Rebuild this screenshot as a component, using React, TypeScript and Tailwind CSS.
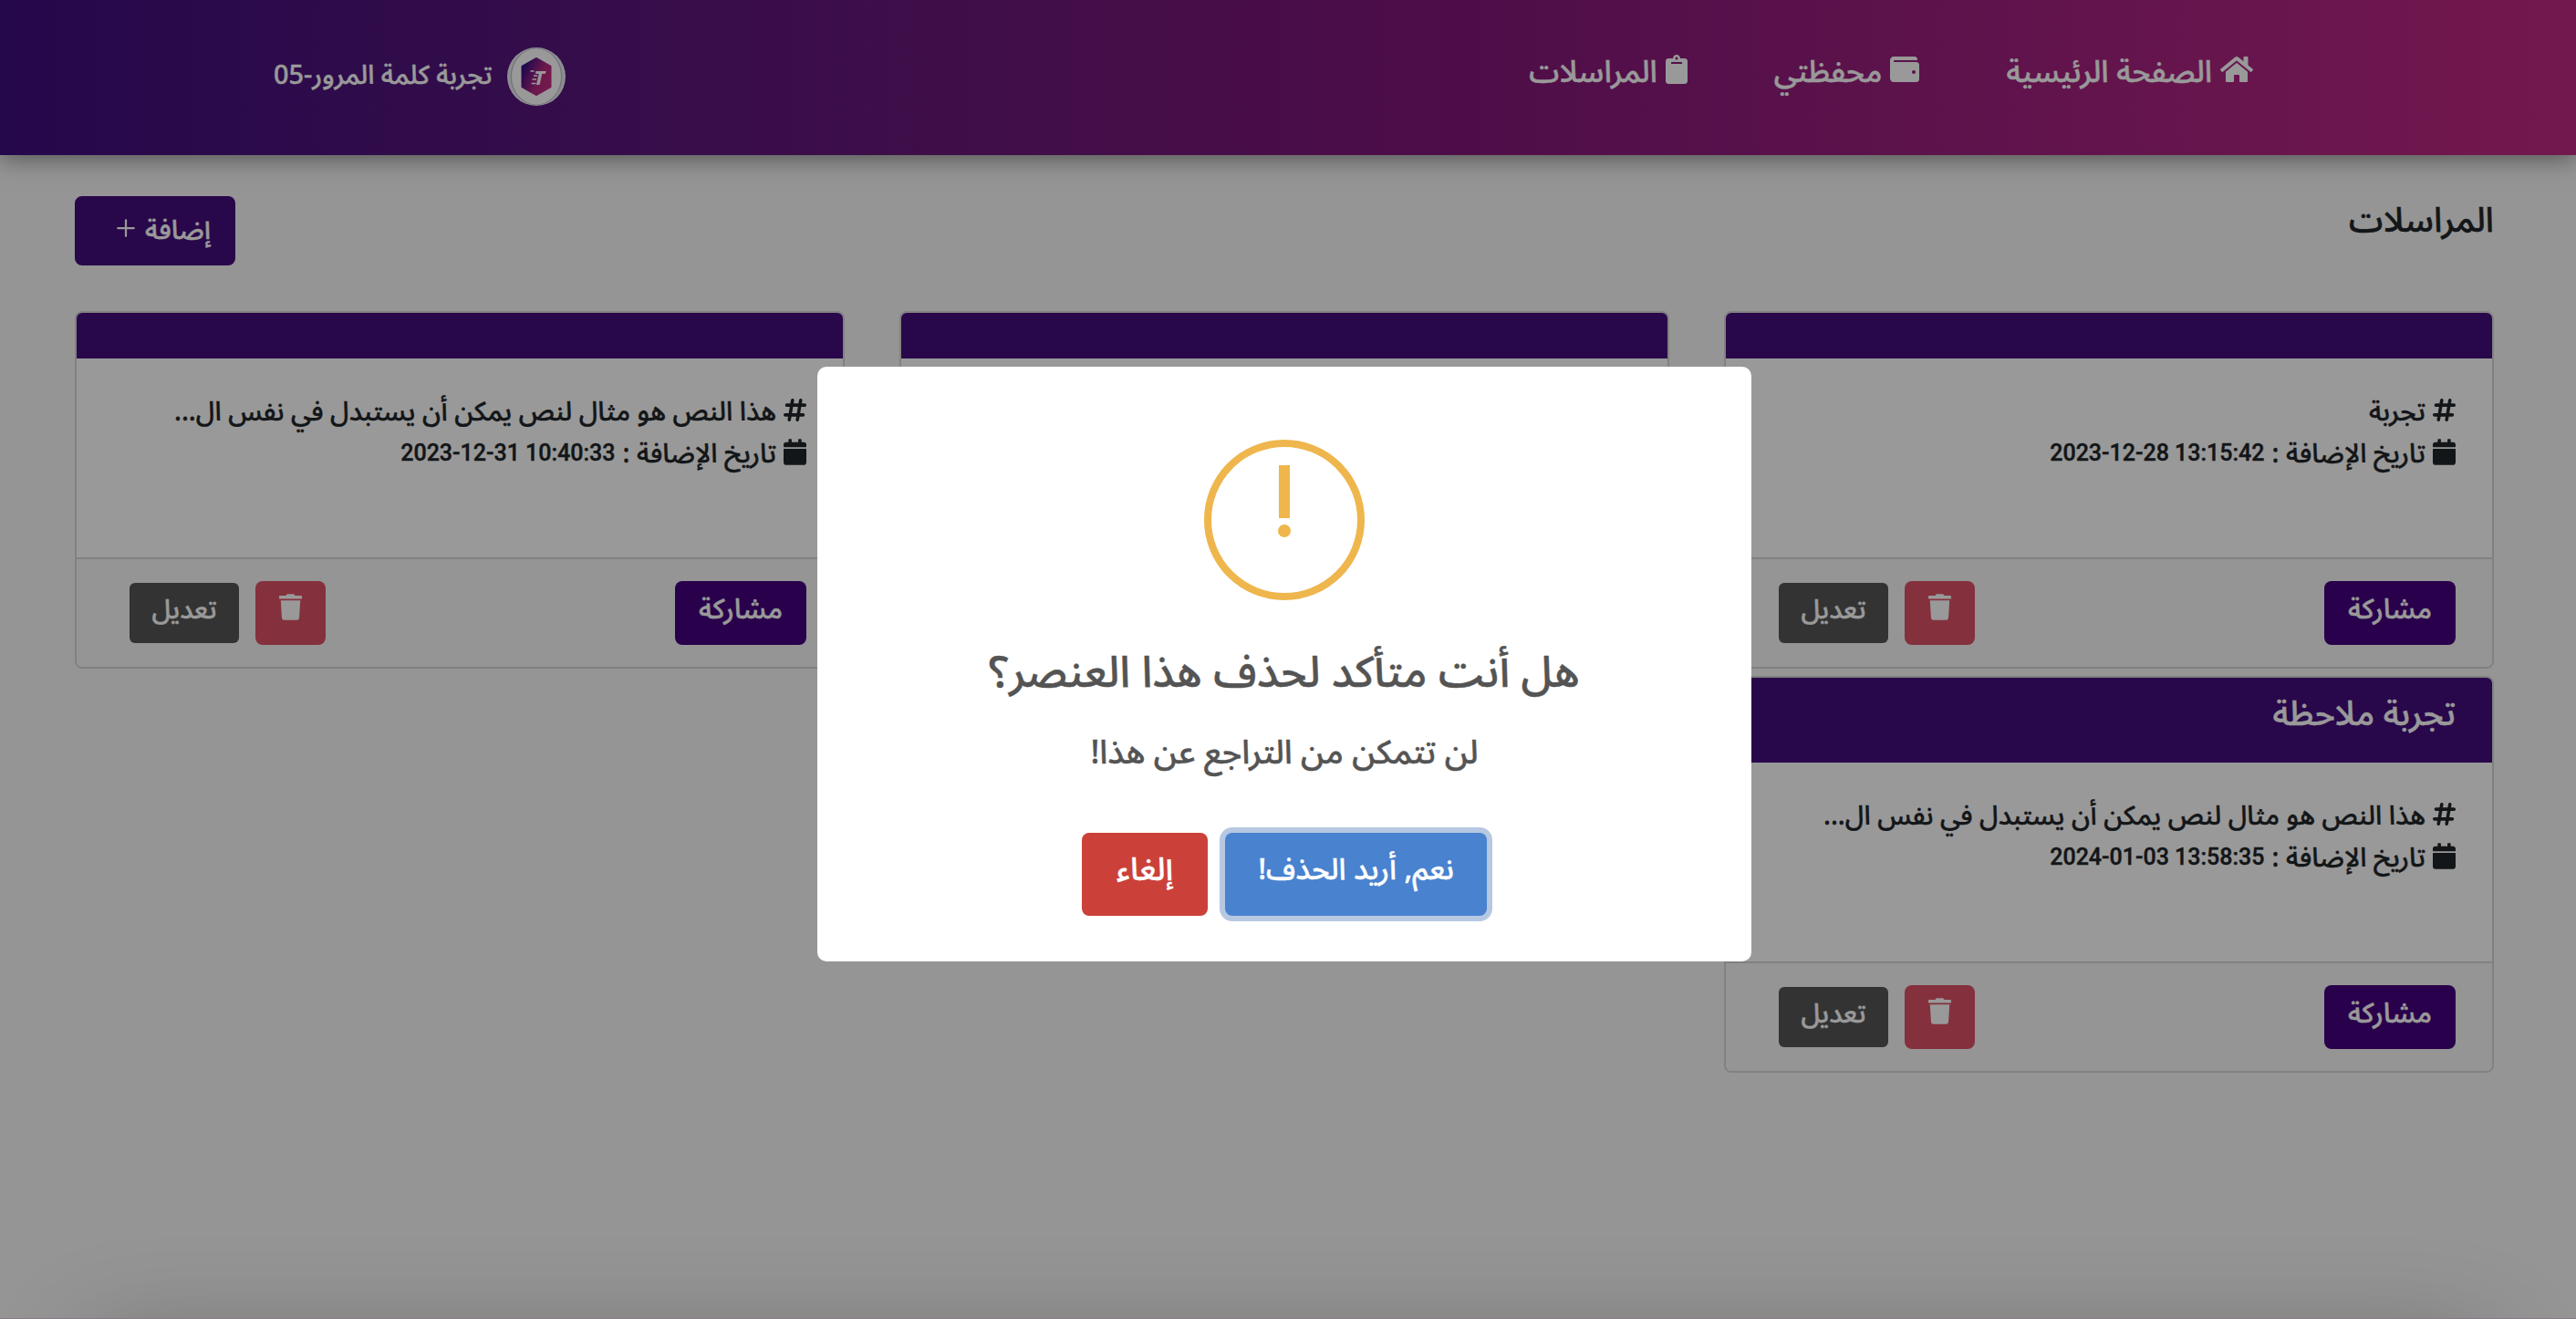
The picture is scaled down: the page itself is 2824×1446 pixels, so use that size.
import { Plus } from "lucide-react";
import {
	FaCalendar,
	FaClipboard,
	FaHome,
	FaTrash,
	FaWallet,
} from "react-icons/fa";
import { FaHashtag } from "react-icons/fa6";

type Message = {
	id: number;
	title?: string;
	text?: string;
	date?: string;
};

const messages: Message[] = [
	{ id: 1, text: "تجربة", date: "2023-12-28 13:15:42" },
	{ id: 2 },
	{
		id: 3,
		text: "هذا النص هو مثال لنص يمكن أن يستبدل في نفس ال...",
		date: "2023-12-31 10:40:33",
	},
	{
		id: 4,
		title: "تجربة ملاحظة",
		text: "هذا النص هو مثال لنص يمكن أن يستبدل في نفس ال...",
		date: "2024-01-03 13:58:35",
	},
];

const Logo = () => (
	<svg viewBox="0 0 64 64" className="h-16 w-16 shrink-0">
		<defs>
			<linearGradient id="hex" x1="0" y1="0.2" x2="1" y2="0.8">
				<stop offset="0" stopColor="#2f0c80" />
				<stop offset="0.6" stopColor="#b3297f" />
				<stop offset="1" stopColor="#c62a80" />
			</linearGradient>
		</defs>
		<circle cx="32" cy="32" r="32" fill="#e9ebf0" />
		<ellipse cx="32" cy="32" rx="28.5" ry="31" fill="#c3c5cf" />
		<ellipse cx="32" cy="32" rx="27" ry="30.5" fill="#ffffff" />
		<path
			d="M32 12.5 47 21v22L32 51.5 17 43V21Z"
			fill="url(#hex)"
			stroke="url(#hex)"
			strokeWidth="3"
			strokeLinejoin="round"
		/>
		<text
			x="35"
			y="41"
			textAnchor="middle"
			fontSize="22"
			fontWeight="700"
			fontStyle="italic"
			fill="#fff"
			className="font-['Noto_Sans']"
		>
			T
		</text>
		<path
			d="M25.5 26h4M29 31h4M27.5 35h4.5M26.5 39.5h5"
			stroke="#fff"
			strokeWidth="1.5"
		/>
	</svg>
);

const Header = () => (
	<header className="flex h-[170px] shrink-0 justify-between bg-linear-to-r from-[#3f0c7d] via-[#80167a] via-55% to-[#c02882] pr-[354px] pl-[300px] text-white shadow-[0_2px_26px_rgba(0,0,0,0.5)]">
		<nav className="flex h-[152px] items-center gap-[95px] text-[33.4px]">
			<a className="flex items-center gap-[9px]">
				<FaHome className="h-8 w-9" />
				<span className="pt-2">الصفحة الرئيسية</span>
			</a>
			<a className="flex items-center gap-[9px]">
				<FaWallet className="size-8" />
				<span className="pt-2">محفظتي</span>
			</a>
			<a className="flex items-center gap-[9px]">
				<FaClipboard className="h-8 w-6" />
				<span className="pt-2">المراسلات</span>
			</a>
		</nav>
		<div className="flex h-[168px] items-center gap-4">
			<Logo />
			<span className="pb-0.5 text-[28.8px]">تجربة كلمة المرور-05</span>
		</div>
	</header>
);

const MessageCard = ({ message }: { message: Message }) => (
	<article className="overflow-hidden rounded-lg border-2 border-[#d7d7d7] bg-white">
		{message.title ? (
			<h3 className="h-[93px] bg-[#450d7d] px-10 pt-3 text-[37.2px] leading-[56px] text-white">
				{message.title}
			</h3>
		) : (
			<div className="h-[50px] bg-[#450d7d]" />
		)}
		<div className="h-[218px] px-10 pt-[33px] text-[29.1px] leading-[40px] text-[#212529]">
			{message.text && (
				<p className="flex h-[46px] items-center gap-2">
					<FaHashtag className="h-[29px] w-[25px]" />
					<span className="pt-[5px]">{message.text}</span>
				</p>
			)}
			{message.date && (
				<p className="flex h-[46px] items-center gap-2">
					<FaCalendar className="h-[29px] w-[25px]" />
					<span className="pt-[5px]">تاريخ الإضافة :</span>
					<bdi dir="ltr" className="pt-[3px] font-['Roboto'] text-[25px]">
						{message.date}
					</bdi>
				</p>
			)}
		</div>
		<div className="flex h-[120px] items-center border-t-2 border-[#d7d7d7] bg-[#f8f8f8] pr-10 pl-[58px] text-white">
			<button className="h-[70px] w-36 rounded-lg bg-[#45007d] pb-[7px] text-[30.5px]">
				مشاركة
			</button>
			<button className="mr-auto flex h-[70px] w-[77px] justify-center rounded-lg bg-[#dc5266] pt-[14px]">
				<FaTrash className="h-[29px] w-[25px]" />
			</button>
			<button className="mr-[18px] h-[66px] w-[120px] rounded-md bg-[#555555] pb-[7px] text-[29px] shadow-[0_0_0_2px_#ffffff20]">
				تعديل
			</button>
		</div>
	</article>
);

const ConfirmDialog = () => (
	<div className="fixed inset-0 flex items-center justify-center bg-black/40 pt-[9px] pr-2">
		<div
			role="dialog"
			className="flex h-[652px] w-[1024px] flex-col items-center rounded-[10px] bg-white pt-20 text-[#545454]"
		>
			<div className="flex h-44 w-44 flex-col items-center rounded-full border-8 border-[#eeb64c] pt-5">
				<span className="h-[58px] w-3 bg-[#eeb64c]" />
				<span className="mt-[7px] h-[14px] w-[14px] rounded-full bg-[#eeb64c]" />
			</div>
			<h2 className="mt-10 text-[47.8px] leading-[80px]">
				هل أنت متأكد لحذف هذا العنصر؟
			</h2>
			<p className="mt-[18px] text-[36.1px] leading-[60px]">
				لن تتمكن من التراجع عن هذا!
			</p>
			<div className="mt-[57px] flex gap-[19px] text-white">
				<button className="h-[91px] w-[287px] rounded-lg bg-[#4982cf] pb-2 text-[32.4px] ring-6 ring-[#b6c8e2]">
					نعم, أريد الحذف!
				</button>
				<button className="h-[91px] w-[138px] rounded-lg bg-[#cb4139] pb-2 text-[35px]">
					إلغاء
				</button>
			</div>
		</div>
	</div>
);

const App = () => {
	return (
		<div
			dir="rtl"
			className="flex h-[1446px] flex-col overflow-hidden bg-[#f8f8f8] font-['Noto_Sans_Arabic','Noto_Sans',sans-serif] font-medium whitespace-nowrap [-webkit-text-stroke:0.4px]"
		>
			<Header />
			<main className="flex-1 pt-[45px] pr-[90px] pl-[82px]">
				<div className="flex h-[76px] justify-between">
					<h1 className="text-[37.8px] leading-[54px] text-[#212529]">المراسلات</h1>
					<button className="flex w-44 items-center gap-1.5 rounded-lg bg-[#450d7d] pr-[27px] pb-1.5 text-[29.5px] text-white">
						<span className="pt-1.5">إضافة</span>
						<Plus className="size-[30px]" strokeWidth={1.8} />
					</button>
				</div>
				<section className="mt-[50px] grid grid-cols-3 items-start gap-x-15 gap-y-2">
					{messages.map((message) => (
						<MessageCard key={message.id} message={message} />
					))}
				</section>
			</main>
			<footer className="h-px shrink-0">
				<div className="h-96 bg-[#dfd3e0] shadow-[0_-75px_110px_-100px_rgba(0,0,0,0.25)]" />
			</footer>
			<ConfirmDialog />
		</div>
	);
};

export default App;
